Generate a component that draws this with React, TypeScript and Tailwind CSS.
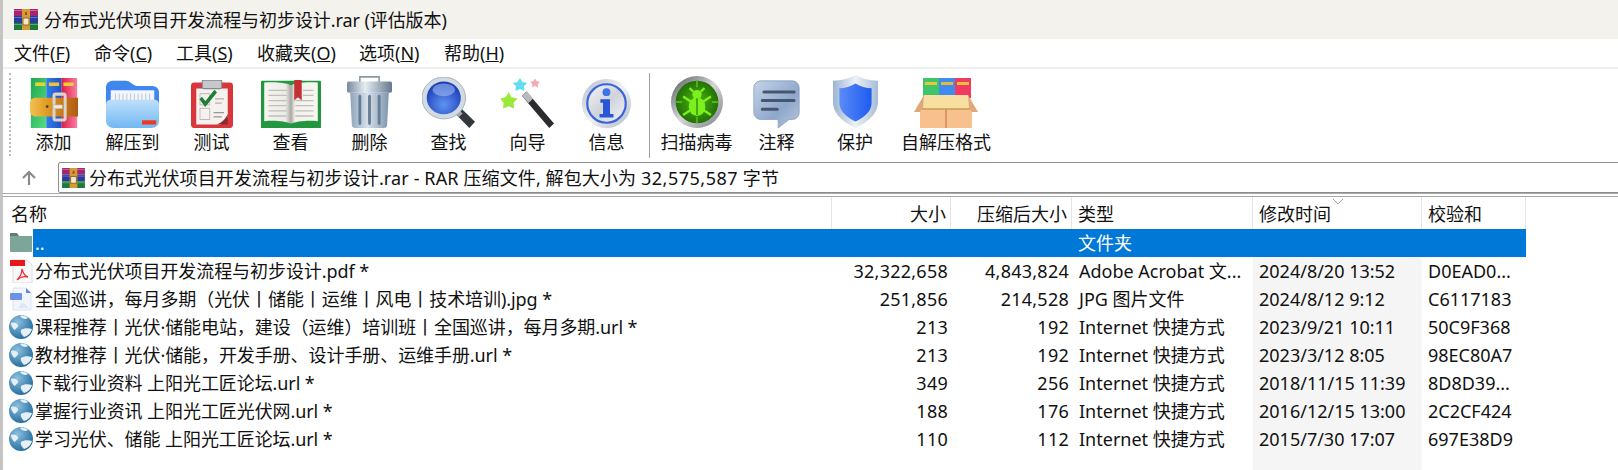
import React, { FC } from "react";

type IconProps = { w?: number; h?: number };

const Svg: FC<IconProps & { children: React.ReactNode }> = ({ w = 56, h = 56, children }) => (
  <svg width={w} height={h} viewBox="0 0 56 56" preserveAspectRatio="none">
    {children}
  </svg>
);

const SmallRar: FC<IconProps> = ({ w = 24, h = 21 }) => (
  <svg width={w} height={h} viewBox="0 0 24 21">
    <rect x="0" y="0" width="24" height="7" fill="#a0286e" />
    <rect x="0" y="7" width="24" height="7" fill="#2c3a9c" />
    <rect x="0" y="14" width="24" height="7" fill="#1f7a3a" />
    <rect x="0" y="1" width="24" height="1" fill="#d85a9c" />
    <rect x="0" y="8" width="24" height="1" fill="#5f70d8" />
    <rect x="0" y="15" width="24" height="1" fill="#4fae6c" />
    <rect x="8" y="0" width="8" height="21" fill="#d89a34" />
    <rect x="9" y="9" width="6" height="7" fill="#f4ead0" stroke="#8a6a2a" />
    <rect x="11" y="3" width="2" height="3" fill="#8a5a1a" />
  </svg>
);

const RarIcon: FC<IconProps> = (p) => (
  <Svg {...p}>
    <defs>
      <linearGradient id="rG" x1="0" x2="1" y1="0" y2="1">
        <stop offset="0" stopColor="#1fa850" />
        <stop offset="1" stopColor="#55dc84" />
      </linearGradient>
      <linearGradient id="rB" x1="0" x2="1" y1="0" y2="0">
        <stop offset="0" stopColor="#2f7ee8" />
        <stop offset="1" stopColor="#2450c4" />
      </linearGradient>
      <linearGradient id="rR" x1="0" x2="1" y1="0" y2="0">
        <stop offset="0" stopColor="#e01c44" />
        <stop offset="1" stopColor="#f77ea4" />
      </linearGradient>
      <linearGradient id="rO" x1="0" x2="1" y1="0" y2="0">
        <stop offset="0" stopColor="#f4c050" />
        <stop offset="0.45" stopColor="#d8921e" />
        <stop offset="1" stopColor="#b05a14" />
      </linearGradient>
    </defs>
    <rect x="1" y="0" width="18" height="56" fill="url(#rG)" />
    <rect x="19" y="0" width="18" height="56" fill="url(#rB)" />
    <rect x="37" y="0" width="18" height="56" fill="url(#rR)" />
    <rect x="6" y="5" width="12" height="4" fill="#e8d038" />
    <rect x="22" y="5" width="12" height="4" fill="#eec13a" />
    <rect x="39" y="5" width="12" height="4" fill="#f0c83c" />
    <path d="M6 22h50v21H6a6 6 0 0 1-6-6v-9a6 6 0 0 1 6-6z" fill="url(#rO)" />
    <circle cx="20" cy="32" r="1.6" fill="#5a3208" />
    <rect x="28" y="18" width="13" height="29" rx="2" fill="none" stroke="#d8d4cc" strokeWidth="3.5" />
    <rect x="27" y="30" width="11" height="4.5" rx="1" fill="#ecebe6" stroke="#9a9690" strokeWidth="0.5" />
  </Svg>
);

const FolderIcon: FC<IconProps> = (p) => (
  <Svg {...p}>
    <defs>
      <linearGradient id="fB" x1="0" x2="0" y1="0" y2="1">
        <stop offset="0" stopColor="#bfe0fb" />
        <stop offset="1" stopColor="#71b8f4" />
      </linearGradient>
    </defs>
    <path d="M0 8a7 7 0 0 1 7-7h14c5 0 7 6 12 6h16a7 7 0 0 1 7 7v28H0z" fill="#3f86ef" />
    <rect x="5" y="12" width="46" height="22" fill="#f2f5fa" />
    <path d="M10 16v11M14 16v11M18 16v11M22 16v11M26 16v11M30 16v11M34 16v11M38 16v11M42 16v11M46 16v11" stroke="#a9b6c8" strokeWidth="0.8" />
    <path d="M0 28c0-3 2-5 5-5h46c3 0 5 2 5 5v20a8 8 0 0 1-8 8H8a8 8 0 0 1-8-8z" fill="url(#fB)" />
    <rect x="38" y="47" width="15" height="5" fill="#ee3a24" />
  </Svg>
);

const TestIcon: FC<IconProps> = (p) => (
  <Svg {...p}>
    <rect x="0" y="3" width="56" height="53" rx="4" fill="#d9363c" />
    <path d="M7 10h42v34l-10 8H7z" fill="#f4f1ee" />
    <path d="M49 40c-4 7-8 9-14 12h14z" fill="#8e2a30" />
    <rect x="15" y="0" width="26" height="10" rx="2" fill="#c6c8cc" stroke="#85888e" strokeWidth="1.5" />
    <rect x="12" y="16" width="13" height="13" fill="#f4f1ee" stroke="#b4b0ac" />
    <path d="M13 21l6 7 14-15" fill="none" stroke="#1f7d34" strokeWidth="4.5" />
    <path d="M32 22h12M32 27h9" stroke="#b4b0ac" strokeWidth="1.5" />
    <rect x="12" y="33" width="13" height="13" fill="#f4f1ee" stroke="#b4b0ac" />
    <path d="M30 38h14M30 43h11" stroke="#9a9692" strokeWidth="1.5" />
  </Svg>
);

const BookIcon: FC<IconProps> = (p) => (
  <Svg {...p}>
    <defs>
      <linearGradient id="bL" x1="0" x2="1" y1="0" y2="0">
        <stop offset="0" stopColor="#f6f5f1" />
        <stop offset="0.8" stopColor="#ecebe6" />
        <stop offset="1" stopColor="#a8a7a2" />
      </linearGradient>
      <linearGradient id="bR" x1="0" x2="1" y1="0" y2="0">
        <stop offset="0" stopColor="#a8a7a2" />
        <stop offset="0.15" stopColor="#f2f1ec" />
        <stop offset="1" stopColor="#f7f6f2" />
      </linearGradient>
    </defs>
    <rect x="0" y="1" width="56" height="55" rx="1" fill="#22973f" />
    <path d="M3 3c10-1 20 0 25 3v45c-5-3-15-4-25-3z" fill="url(#bL)" />
    <path d="M28 6c5-3 15-4 25-3v45c-10-1-20 0-25 3z" fill="url(#bR)" />
    <path d="M7 12h17M7 18h17M7 24h17M7 30h17M7 36h17M7 42h17M32 24h17M32 30h17M32 36h17M32 42h17M39 12h10M39 18h10" stroke="#c0bfb8" strokeWidth="1.5" />
    <path d="M31 0h7v24l-3.500-4-3.500 4z" fill="#c32f33" />
  </Svg>
);

const TrashIcon: FC<IconProps> = (p) => (
  <Svg {...p}>
    <defs>
      <linearGradient id="tS" x1="0" x2="1" y1="0" y2="0">
        <stop offset="0" stopColor="#8fa5bd" />
        <stop offset="0.45" stopColor="#d6e0ea" />
        <stop offset="1" stopColor="#7f96ae" />
      </linearGradient>
      <linearGradient id="tL" x1="0" x2="1" y1="0" y2="0">
        <stop offset="0" stopColor="#78889c" />
        <stop offset="0.4" stopColor="#e4ecf3" />
        <stop offset="1" stopColor="#66788e" />
      </linearGradient>
    </defs>
    <path d="M16 7V1h24v6" fill="none" stroke="#8c9aa8" strokeWidth="2" />
    <rect x="0" y="6" width="56" height="12" rx="2" fill="url(#tL)" />
    <path d="M4 18h48l-2 34a4 4 0 0 1-4 4H10a4 4 0 0 1-4-4z" fill="url(#tS)" />
    <path d="M16 22v29M28 22v29M40 22v29" stroke="#667c94" strokeWidth="3.5" strokeLinecap="round" />
  </Svg>
);

const SearchIcon: FC<IconProps> = (p) => (
  <Svg {...p}>
    <defs>
      <radialGradient id="sB" cx="0.5" cy="0.7" r="0.65">
        <stop offset="0" stopColor="#5f94f2" />
        <stop offset="1" stopColor="#1c3cb8" />
      </radialGradient>
    </defs>
    <path d="M35 40l6-6 15 15-6 7z" fill="#33373c" />
    <path d="M36 41l4-4 3 3-4 4z" fill="#a4a8ac" />
    <circle cx="23" cy="23" r="23" fill="#d2dae2" stroke="#a4b0bc" />
    <circle cx="23" cy="23" r="18" fill="url(#sB)" />
    <ellipse cx="23" cy="14" rx="12" ry="7" fill="#a6c2f5" opacity="0.55" />
  </Svg>
);

const Star: FC<{ cx: number; cy: number; r: number; fill: string }> = ({ cx, cy, r, fill }) => {
  const pts = Array.from({ length: 10 }, (_, i) => {
    const a = -Math.PI / 2 + (i * Math.PI) / 5;
    const d = i % 2 ? r * 0.55 : r;
    return `${cx + d * Math.cos(a)},${cy + d * Math.sin(a)}`;
  }).join(" ");
  return <polygon points={pts} fill={fill} />;
};

const WandIcon: FC<IconProps> = (p) => (
  <Svg {...p}>
    <path d="M22 20l5-5 29 36-5 5z" fill="#2c2c30" />
    <path d="M22 20l5-5 7 8-5 5z" fill="#b9b9bc" />
    <Star cx={20} cy={8} r={8} fill="#62dcf2" />
    <Star cx={36} cy={6} r={5.5} fill="#f4aab2" />
    <Star cx={8} cy={26} r={10} fill="#9ce83c" />
  </Svg>
);

const InfoIcon: FC<IconProps> = (p) => (
  <Svg {...p}>
    <defs>
      <linearGradient id="iS" x1="0" x2="1" y1="0" y2="1">
        <stop offset="0" stopColor="#b4bcc6" />
        <stop offset="0.5" stopColor="#f0f2f5" />
        <stop offset="1" stopColor="#b0b8c2" />
      </linearGradient>
      <linearGradient id="iF" x1="0" x2="1" y1="0" y2="1">
        <stop offset="0" stopColor="#f4f5f8" />
        <stop offset="0.5" stopColor="#d0d4da" />
        <stop offset="1" stopColor="#f2f3f6" />
      </linearGradient>
    </defs>
    <circle cx="28" cy="28" r="28" fill="url(#iS)" />
    <circle cx="28" cy="28" r="22" fill="url(#iF)" stroke="#3c62dc" strokeWidth="2.5" />
    <circle cx="28" cy="15" r="4.5" fill="#3f74e4" />
    <path d="M21 23h11v17h4v4H20v-4h4V27h-3z" fill="#2a56d8" />
  </Svg>
);

const ScanIcon: FC<IconProps> = (p) => (
  <Svg {...p}>
    <defs>
      <radialGradient id="vG" cx="0.5" cy="0.5" r="0.55">
        <stop offset="0" stopColor="#4fb60e" />
        <stop offset="1" stopColor="#1d6a06" />
      </radialGradient>
      <linearGradient id="vS" x1="0" x2="1" y1="0" y2="1">
        <stop offset="0" stopColor="#55585c" />
        <stop offset="0.5" stopColor="#d4d6d8" />
        <stop offset="1" stopColor="#7c7f84" />
      </linearGradient>
    </defs>
    <circle cx="28" cy="28" r="28" fill="url(#vS)" />
    <circle cx="28" cy="28" r="23" fill="url(#vG)" />
    <path d="M28 5v7M28 44v7M5 28h7M44 28h7" stroke="#5cc61a" strokeWidth="1.5" />
    <ellipse cx="28" cy="33" rx="9" ry="10" fill="#7cf01e" />
    <circle cx="28" cy="20" r="5" fill="#7cf01e" />
    <path d="M20 13l4 4M36 13l-4 4M13 22l9 6M43 22l-9 6M13 42l9-6M43 42l-9-6" stroke="#7cf01e" strokeWidth="2.5" fill="none" />
    <path d="M28 24v18" stroke="#2f8a0a" strokeWidth="1.5" />
  </Svg>
);

const CommentIcon: FC<IconProps> = (p) => (
  <Svg {...p}>
    <defs>
      <linearGradient id="cB" x1="0" x2="1" y1="0" y2="1">
        <stop offset="0" stopColor="#c5d5ea" />
        <stop offset="0.6" stopColor="#8ea7cb" />
        <stop offset="1" stopColor="#b9c9df" />
      </linearGradient>
    </defs>
    <path d="M9 1h38a8 8 0 0 1 8 8v29a8 8 0 0 1-8 8h-4L30 56V46H9a8 8 0 0 1-8-8V9a8 8 0 0 1 8-8z" fill="url(#cB)" stroke="#8ba0be" />
    <path d="M13 14h36M11 24h38M11 34h18" stroke="#46566e" strokeWidth="3.5" strokeLinecap="round" />
  </Svg>
);

const ShieldIcon: FC<IconProps> = (p) => (
  <Svg {...p}>
    <defs>
      <linearGradient id="hS" x1="0" x2="1" y1="0" y2="0">
        <stop offset="0" stopColor="#9cb4d2" />
        <stop offset="0.5" stopColor="#edf2f8" />
        <stop offset="1" stopColor="#a6bcd6" />
      </linearGradient>
      <linearGradient id="hB" x1="0" x2="1" y1="0" y2="0">
        <stop offset="0" stopColor="#5a8bf8" />
        <stop offset="1" stopColor="#1e5cf0" />
      </linearGradient>
    </defs>
    <path d="M28 0c8 4 18 6 28 6v22c0 14-14 22-28 28C14 50 0 42 0 28V6c10 0 20-2 28-6z" fill="url(#hS)" />
    <path d="M28 9c6 3 13 5 20 5v15c0 10-10 16-20 20C18 45 8 39 8 29V14c7 0 14-2 20-5z" fill="url(#hB)" />
  </Svg>
);

const BoxIcon: FC<IconProps> = () => (
  <svg width="64" height="50" viewBox="0 0 64 50">
    <rect x="9" y="0" width="16" height="20" fill="#3fc46a" />
    <rect x="25" y="0" width="16" height="20" fill="#3f8cf0" />
    <rect x="41" y="0" width="16" height="20" fill="#f03a60" />
    <rect x="11" y="4" width="12" height="3" fill="#e8c83a" />
    <rect x="27" y="4" width="12" height="3" fill="#e8b83a" />
    <rect x="43" y="4" width="12" height="3" fill="#f0c03a" />
    <rect x="6" y="28" width="52" height="22" fill="#f7c08c" />
    <path d="M32 28v22" stroke="#d08a58" strokeWidth="1.5" />
    <path d="M10 17h44l4 11-6 3H12l-6-3z" fill="#f6dfa0" />
    <path d="M10 17L0 34h6l3-5zM54 17l10 17h-6l-3-5z" fill="#e0a878" />
    <path d="M8 31h48" stroke="#c89a58" strokeWidth="1.5" />
  </svg>
);

const GlobeIcon = () => (
  <svg width="24" height="24" viewBox="0 0 24 24">
    <defs>
      <radialGradient id="gl" cx="0.35" cy="0.3" r="0.8">
        <stop offset="0" stopColor="#8cc0de" />
        <stop offset="1" stopColor="#1a6498" />
      </radialGradient>
    </defs>
    <circle cx="12" cy="12" r="12" fill="url(#gl)" />
    <path d="M2 8c3-1 6 0 7 2s-2 3-3 5c-2-1-4-4-4-7zM12 15c3-2 7-2 11-1-1 4-4 7-8 8-2-2-4-5-3-7zM11 1c3-1 6 0 8 2-2 2-6 1-8-2z" fill="#e4f0f6" />
  </svg>
);

const GrayFolder = () => (
  <svg width="24" height="24" viewBox="0 0 24 24">
    <path d="M1 2h7l2 3h13v3H1z" fill="#5f7f6c" />
    <rect x="1" y="5" width="22" height="16" rx="1" fill="#7da69a" />
  </svg>
);

const PdfIcon = () => (
  <svg width="24" height="24" viewBox="0 0 24 24">
    <path d="M4 1h14l5 5v18H4z" fill="#fafafa" stroke="#dcdcdc" />
    <rect x="1" y="1" width="15" height="6" fill="#e8171c" />
    <path d="M8 21c3-3 5-7 5-11 1 4 3 7 6 8-4-1-8 0-11 3z" fill="none" stroke="#e8343a" strokeWidth="1.3" />
  </svg>
);

const JpgIcon = () => (
  <svg width="24" height="24" viewBox="0 0 24 24">
    <path d="M4 1h13l5 5v17H4z" fill="#f2f6fc" stroke="#dbe4f2" />
    <path d="M17 1l5 5h-5z" fill="#5c8ae8" />
    <rect x="1" y="6" width="12" height="7" rx="1" fill="#6a93e8" />
    <path d="M9 21l5-6 6 6z" fill="#dce8f8" />
  </svg>
);

const tools: [string, FC<IconProps>, number, number][] = [
  ["添加", RarIcon, 48, 50],
  ["解压到", FolderIcon, 53, 48],
  ["测试", TestIcon, 42, 48],
  ["查看", BookIcon, 60, 48],
  ["删除", TrashIcon, 45, 52],
  ["查找", SearchIcon, 53, 51],
  ["向导", WandIcon, 53, 50],
  ["信息", InfoIcon, 49, 49],
];

const tools2: [string, FC<IconProps>, number, number, string][] = [
  ["扫描病毒", ScanIcon, 52, 52, "w-[89px]"],
  ["注释", CommentIcon, 47, 48, "w-[71px]"],
  ["保护", ShieldIcon, 45, 53, "w-[86px]"],
  ["自解压格式", BoxIcon, 64, 50, "w-[96px]"],
];

const menus: [string, string, string, string][] = [
  ["文件(", "F", ")", "w-[80px]"],
  ["命令(", "C", ")", "w-[82px]"],
  ["工具(", "S", ")", "w-[81px]"],
  ["收藏夹(", "O", ")", "w-[102px]"],
  ["选项(", "N", ")", "w-[85px]"],
  ["帮助(", "H", ")", "w-[70px]"],
];

const rows: [React.ReactNode, string, string, string, string, string, string][] = [
  [<PdfIcon />, "分布式光伏项目开发流程与初步设计.pdf *", "32,322,658", "4,843,824", "Adobe Acrobat 文...", "2024/8/20 13:52", "D0EAD0..."],
  [<JpgIcon />, "全国巡讲，每月多期（光伏丨储能丨运维丨风电丨技术培训).jpg *", "251,856", "214,528", "JPG 图片文件", "2024/8/12 9:12", "C6117183"],
  [<GlobeIcon />, "课程推荐丨光伏·储能电站，建设（运维）培训班丨全国巡讲，每月多期.url *", "213", "192", "Internet 快捷方式", "2023/9/21 10:11", "50C9F368"],
  [<GlobeIcon />, "教材推荐丨光伏·储能，开发手册、设计手册、运维手册.url *", "213", "192", "Internet 快捷方式", "2023/3/12 8:05", "98EC80A7"],
  [<GlobeIcon />, "下载行业资料 上阳光工匠论坛.url *", "349", "256", "Internet 快捷方式", "2018/11/15 11:39", "8D8D39..."],
  [<GlobeIcon />, "掌握行业资讯 上阳光工匠光伏网.url *", "188", "176", "Internet 快捷方式", "2016/12/15 13:00", "2C2CF424"],
  [<GlobeIcon />, "学习光伏、储能 上阳光工匠论坛.url *", "110", "112", "Internet 快捷方式", "2015/7/30 17:07", "697E38D9"],
];

const gridCols = "grid grid-cols-[829px_119px_121px_181px_169px_104px]";
const cell = "whitespace-nowrap overflow-hidden";

export default function App() {
  return (
    <div className="h-[470px] w-[1618px] overflow-hidden bg-white text-[18px] leading-[28px] text-[#111] font-['Noto_Sans','Noto_Sans_CJK_SC',sans-serif] flex flex-col border-l-[3px] border-[#c4c4c4]">
      <div className="h-[39px] shrink-0 bg-[#f3f2ec] flex items-center pl-[11px] gap-[6px]">
        <SmallRar />
        <span className="tracking-[-0.08px]">分布式光伏项目开发流程与初步设计.rar (评估版本)</span>
      </div>

      <div className="h-[28px] shrink-0 flex items-center pl-[11px]">
        {menus.map(([a, k, b, w]) => (
          <span key={a} className={`${w} shrink-0`}>
            {a}
            <span className="underline">{k}</span>
            {b}
          </span>
        ))}
      </div>

      <div className="h-[95px] shrink-0 border-t-[2px] border-[#f0f0f0] flex pl-[6px]">
        <div className="w-[3px] mt-[4px] mb-[6px] border-l-[2px] border-dotted border-[#b8b8b8] mr-[2px]" />
        {tools.map(([label, Icon, w, h]) => (
          <div key={label} className="w-[79px] shrink-0 flex flex-col items-center pt-[5px]">
            <div className="h-[54px] flex items-end"><Icon w={w} h={h} /></div>
            <span>{label}</span>
          </div>
        ))}
        <div className="w-px bg-[#a0a0a0] my-[4px] ml-[3px] mr-[2px]" />
        {tools2.map(([label, Icon, w, h, cw]) => (
          <div key={label} className={`${cw} shrink-0 flex flex-col items-center pt-[5px]`}>
            <div className="h-[54px] flex items-end"><Icon w={w} h={h} /></div>
            <span className="whitespace-nowrap">{label}</span>
          </div>
        ))}
      </div>

      <div className="h-[31px] shrink-0 flex items-center">
        <div className="w-[52px] shrink-0 flex justify-center text-[#8a8a8a]">
          <svg width="18" height="18" viewBox="0 0 18 18">
            <path d="M9 16V3M3 9l6-6 6 6" fill="none" stroke="currentColor" strokeWidth="2.2" />
          </svg>
        </div>
        <div className="flex-1 ml-[3px] mr-[-6px] h-[31px] border border-[#8e8e8e] rounded-l-[2px] flex items-center pl-[3px] gap-[4px]">
          <SmallRar w={23} h={20} />
          <span className="whitespace-nowrap tracking-[0.12px]">分布式光伏项目开发流程与初步设计.rar - RAR 压缩文件, 解包大小为 <span className="tracking-[0.5px]">32,575,587</span> 字节</span>
        </div>
      </div>

      <div className="h-[4px] shrink-0 border-y border-[#a8a8a8]" />

      <div className="flex-1 flex flex-col">
        <div className={`${gridCols} h-[32px] shrink-0 items-center`}>
          <div className="pl-[8px] pt-[1px] h-full flex items-center border-r border-[#e5e5e5]">名称</div>
          <div className="pr-[4px] pt-[1px] h-full flex items-center justify-end border-r border-[#e5e5e5]">大小</div>
          <div className="pr-[4px] pt-[1px] h-full flex items-center justify-end border-r border-[#e5e5e5]">压缩后大小</div>
          <div className="pl-[6px] pt-[1px] h-full flex items-center border-r border-[#e5e5e5]">类型</div>
          <div className="relative pl-[6px] pt-[1px] h-full flex items-center border-r border-[#e5e5e5]">
            修改时间
            <svg className="absolute left-[79px] top-[1px]" width="12" height="7" viewBox="0 0 12 7">
              <path d="M1 1l5 5 5-5" fill="none" stroke="#a0a0a0" />
            </svg>
          </div>
          <div className="pl-[6px] pt-[1px] h-full flex items-center border-r border-[#e5e5e5]">校验和</div>
        </div>

        <div className={`${gridCols} h-[28px] shrink-0`}>
          <div className="flex items-center pl-[6px]">
            <GrayFolder />
            <div className="flex-1 h-full bg-[#0078d7] text-white pl-[2px]">..</div>
          </div>
          <div className="bg-[#0078d7]" />
          <div className="bg-[#0078d7]" />
          <div className="bg-[#0078d7] text-white pl-[6px]">文件夹</div>
          <div className="bg-[#0078d7]" />
          <div className="bg-[#0078d7]" />
        </div>

        {rows.map(([icon, name, size, packed, type, date, crc]) => (
          <div key={name} className={`${gridCols} h-[28px] shrink-0`}>
            <div className={`${cell} flex items-center pl-[6px] gap-[2px]`}>
              <span className="shrink-0 flex">{icon}</span>
              <span className="tracking-[-0.08px]">{name}</span>
            </div>
            <div className={`${cell} text-right pr-[3px] tracking-[0.25px]`}>{size}</div>
            <div className={`${cell} text-right pr-[3px] tracking-[0.25px]`}>{packed}</div>
            <div className={`${cell} pl-[7px]`}>{type}</div>
            <div className={`${cell} pl-[6px] bg-[#f5f5f5]`}>{date}</div>
            <div className={`${cell} pl-[6px]`}>{crc}</div>
          </div>
        ))}

        <div className={`${gridCols} flex-1`}>
          <div />
          <div />
          <div />
          <div />
          <div className="bg-[#f5f5f5]" />
          <div />
        </div>
      </div>
    </div>
  );
}
